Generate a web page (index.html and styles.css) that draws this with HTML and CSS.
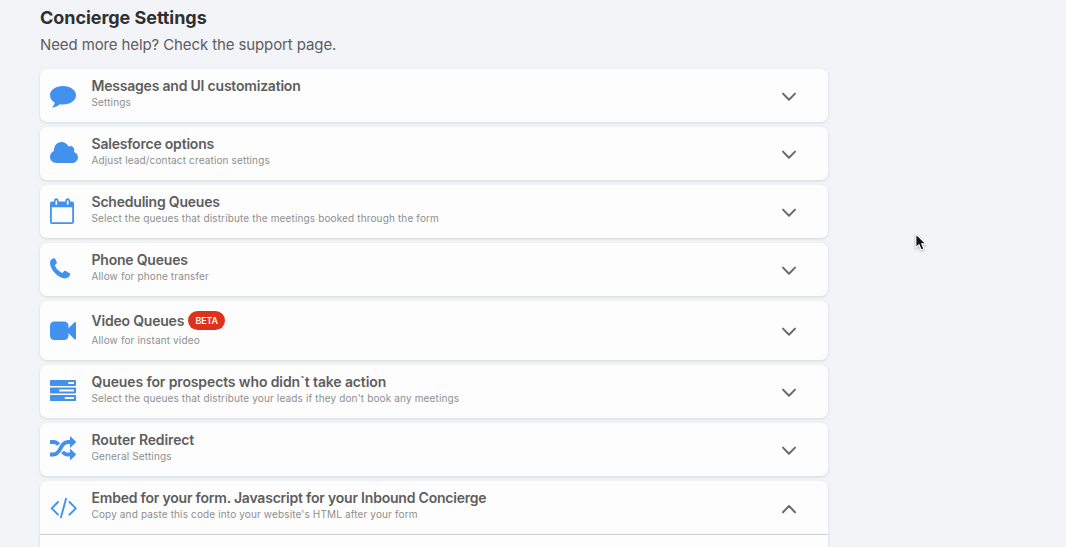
FILE: index.html
```
<!DOCTYPE html>
<html lang="en">
<head>
<meta charset="utf-8">
<title>Concierge Settings</title>
<link rel="stylesheet" href="styles.css">
</head>
<body>
<main class="page">
  <h1 class="page-title">Concierge Settings</h1>
  <p class="page-help">Need more help? Check the support page.</p>
  <div class="cards">
    <section class="card">
      <svg class="icon" viewBox="0 0 28 28"><path d="M13 4C5.600 4 0 8.100 0 13.200c0 3.200 2 5.800 4.700 7.400-.2 1.900-1.300 3.600-2.700 4.900 3.100-.2 5.900-1.500 7.800-3.300 1 .2 2.100.3 3.200.3 7.300 0 13-4.100 13-9.300S20.300 4 13 4z"/></svg>
      <div class="text"><h2 class="title">Messages and UI customization</h2><p class="sub">Settings</p></div>
      <svg class="chevron" viewBox="0 0 16 10"><path d="M2 1.600 8 7.800l6-6.200"/></svg>
    </section>
    <section class="card">
      <svg class="icon" viewBox="0 0 28 28"><path d="M6.500 23C2.800 23 0 20.200 0 16.800c0-2.600 1.500-4.900 3.900-5.800C3.700 5.900 7.100 2 11.500 2c3 0 5.700 1.700 6.900 4.500 2.700-1.500 5.900.4 5.900 3.500 0 .8-.2 1.300-.5 1.900 2.500.6 4.200 2.700 4.200 5.300 0 3.200-2.600 5.800-5.800 5.800z"/></svg>
      <div class="text"><h2 class="title">Salesforce options</h2><p class="sub">Adjust lead/contact creation settings</p></div>
      <svg class="chevron" viewBox="0 0 16 10"><path d="M2 1.600 8 7.800l6-6.200"/></svg>
    </section>
    <section class="card">
      <svg class="icon" viewBox="0 0 28 28"><path fill-rule="evenodd" d="M2 3.500h2V2.600C4 1.200 5 .3 6.300.3s2.300.9 2.300 2.300v.9h6.800v-.9c0-1.400 1-2.300 2.300-2.300S20 1.200 20 2.600v.9h2c1.200 0 2 .8 2 2V24c0 1.200-.8 2-2 2H2c-1.200 0-2-.8-2-2V5.500c0-1.200.8-2 2-2zM1.800 9.300v14.900h20.400V9.300zM5.500 2.500v4.200h1.600V2.500zm11.400 0v4.200h1.600V2.500z"/></svg>
      <div class="text"><h2 class="title">Scheduling Queues</h2><p class="sub">Select the queues that distribute the meetings booked through the form</p></div>
      <svg class="chevron" viewBox="0 0 16 10"><path d="M2 1.600 8 7.800l6-6.200"/></svg>
    </section>
    <section class="card">
      <svg class="icon" viewBox="0 0 28 28"><path d="M3.900 2.200C4.400 2 4.900 2.200 5.200 2.800l1.500 3.100c.5 1-.1 1.600-.9 2.300-.9.700-1 1.200-.6 2 1.400 2.700 3.400 4.800 6.300 6.400.8.400 1.300.2 1.900-.7.700-.9 1.300-1.500 2.300-.9l3.500 1.900c.8.400 1.100.8.900 1.700-.6 2.500-2.500 3.800-5 3.800C8.100 22.200 0 13.500 0 6.700 0 4.300 1.700 2.500 3.900 2.200z"/></svg>
      <div class="text"><h2 class="title">Phone Queues</h2><p class="sub">Allow for phone transfer</p></div>
      <svg class="chevron" viewBox="0 0 16 10"><path d="M2 1.600 8 7.800l6-6.200"/></svg>
    </section>
    <section class="card card-beta">
      <svg class="icon" viewBox="0 0 28 28"><rect y="4.500" width="18.500" height="18.500" rx="4.200"/><path d="M18 11.700 24.500 5.300c.6-.6 1.500-.3 1.500.6v15.700c0 .9-.9 1.200-1.500.6L18 15.800z"/></svg>
      <div class="text"><h2 class="title"><span>Video Queues</span><span class="badge">BETA</span></h2><p class="sub">Allow for instant video</p></div>
      <svg class="chevron" viewBox="0 0 16 10"><path d="M2 1.600 8 7.800l6-6.200"/></svg>
    </section>
    <section class="card">
      <svg class="icon" viewBox="0 0 28 28"><path fill-rule="evenodd" d="M.8 2h24.400q.8 0 .8.800v4.400q0 .8-.8.800H.8Q0 8 0 7.200V2.800Q0 2 .8 2zm17.500 2v2H24V4zM.8 9.500h24.400q.8 0 .8.800v4.400q0 .8-.8.800H.8q-.8 0-.8-.8v-4.400q0-.8.800-.8zm8.400 2v2H24v-2zM.8 17h24.400q.8 0 .8.800v4.400q0 .8-.8.800H.8q-.8 0-.8-.8v-4.400q0-.8.8-.8zm14 2v2H24v-2z"/></svg>
      <div class="text"><h2 class="title title-wide">Queues for prospects who didn`t take action</h2><p class="sub">Select the queues that distribute your leads if they don't book any meetings</p></div>
      <svg class="chevron" viewBox="0 0 16 10"><path d="M2 1.600 8 7.800l6-6.200"/></svg>
    </section>
    <section class="card">
      <svg class="icon" viewBox="0 0 28 28"><path class="line" d="M0 18.500h3.500C11.500 18.500 9.500 6 18 6H21M0 6h3.500c2.400 0 3.900 1 5 2.700M12.600 15.700c1.300 1.900 2.900 2.800 5.400 2.800H21"/><path d="M20 .7q0-.6.6-.2l5.200 5q.5.500 0 1l-5.200 5q-.6.400-.6-.2zM20 13.200q0-.6.600-.2l5.200 5q.5.500 0 1l-5.200 5q-.6.400-.6-.2z"/></svg>
      <div class="text"><h2 class="title title-wide">Router Redirect</h2><p class="sub">General Settings</p></div>
      <svg class="chevron" viewBox="0 0 16 10"><path d="M2 1.600 8 7.800l6-6.200"/></svg>
    </section>
    <section class="card card-open">
      <svg class="icon" viewBox="0 0 28 28"><path class="thin" d="M8 8 1.700 14.400 8 20.700M16 4.800l-5 18.500M19.500 8l6.300 6.400-6.300 6.300"/></svg>
      <div class="text"><h2 class="title">Embed for your form. Javascript for your Inbound Concierge</h2><p class="sub">Copy and paste this code into your website's HTML after your form</p></div>
      <svg class="chevron" viewBox="0 0 16 10"><path d="M2 8.200 8 2l6 6.200"/></svg>
    </section>
    <div class="card-body"></div>
  </div>
  <svg class="cursor" viewBox="0 0 16 20"><path d="M2 1v14.500l3.300-3.100 2.400 5.500 2.900-1.200-2.300-5.200h4.500z"/></svg>
</main>
</body>
</html>
```
FILE: styles.css
```
* { box-sizing: border-box; margin: 0; padding: 0; }
body {
  width: 1066px;
  height: 547px;
  overflow: hidden;
  background: #f2f4f8;
  font-family: Inter, "Liberation Sans", sans-serif;
}
.page { padding: 7px 0 0 40px; }
.page-title { font-size: 18px; line-height: 22px; font-weight: 700; letter-spacing: -.05px; color: #303030; }
.page-help { margin-top: 5px; font-size: 15px; line-height: 22px; color: #5d5d5d; letter-spacing: -.11px; }
.cards { display: flex; flex-direction: column; width: 788px; margin-top: 13px; }
.card {
  display: flex;
  align-items: center;
  height: 53px;
  margin-bottom: 5px;
  padding: 1px 31px 0 10px;
  background: #fdfdfd;
  border-radius: 7px;
  box-shadow: 0 1px 3px rgba(60, 66, 72, .16);
}
.card-beta { height: 59px; }
.card-open { height: 54px; margin-bottom: 0; border-radius: 7px 7px 0 0; border-bottom: 1px solid #d2d3d4; }
.card-body { height: 30px; background: #fdfdfd; box-shadow: 0 1px 3px rgba(60, 66, 72, .16); }
.icon { width: 28px; height: 28px; flex: none; fill: #4391ee; }
.line { fill: none; stroke: #4391ee; stroke-width: 3.800; }
.thin { fill: none; stroke: #4391ee; stroke-width: 1.900; stroke-linecap: round; stroke-linejoin: round; }
.text { flex: 1; margin-left: 13.500px; padding-bottom: 6px; white-space: nowrap; }
.title { display: flex; align-items: center; gap: 4px; font-size: 14px; line-height: 18px; font-weight: 600; letter-spacing: -.21px; color: #5e5e5e; }
.title-wide { letter-spacing: -.12px; }
.sub { font-size: 10px; line-height: 15px; color: #8e8e8e; letter-spacing: .14px; }
.badge {
  width: 37px;
  height: 19px;
  border-radius: 10px;
  background: #df321c;
  color: #fff;
  font-size: 9px;
  line-height: 19px;
  text-align: center;
}
.card-beta .sub { margin-top: 3px; }
.card-beta .text { padding-bottom: 3px; }
.chevron { width: 16px; height: 10px; margin: 2px 0 0; flex: none; fill: none; stroke: #6b6b6b; stroke-width: 2; stroke-linecap: round; stroke-linejoin: round; }
.cursor { position: absolute; left: 914px; top: 233px; width: 15px; height: 19px; fill: #111; stroke: #fff; stroke-width: 1.200; filter: drop-shadow(0 1px 1px rgba(0, 0, 0, .3)); }
```
